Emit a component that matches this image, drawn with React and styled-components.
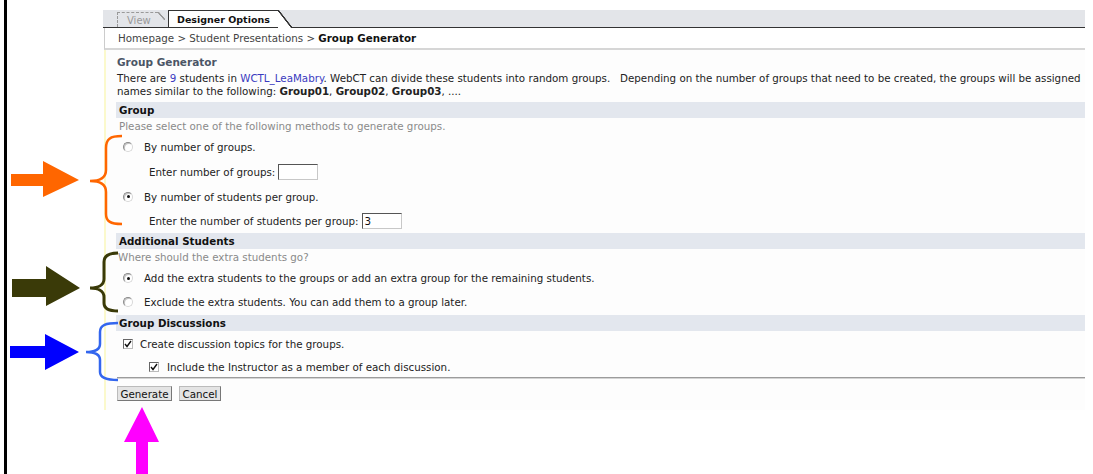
import React from 'react';
import styled, { createGlobalStyle } from 'styled-components';

const GlobalStyle = createGlobalStyle`
  html, body {
    margin: 0;
    padding: 0;
    background: #fff;
  }
`;

const Page = styled.div`
  position: relative;
  width: 1093px;
  height: 474px;
  overflow: hidden;
  display: flex;
  background: #fff;
  font-family: 'DejaVu Sans', Verdana, sans-serif;
  font-size: 10.3px;
  color: #222;
`;

const Edge = styled.div`
  width: 3px;
  margin-left: 4px;
  background: #000;
`;

const Shot = styled.div`
  width: 982px;
  margin-left: 96px;
  display: flex;
  flex-direction: column;
`;

/** tab strip */

const TabStrip = styled.div`
  margin-top: 10px;
  height: 17px;
  background: #e3e5e9;
  border-bottom: 1px solid #333;
  display: flex;
  align-items: flex-end;
  padding-left: 14px;
`;

const Tab = styled.div`
  position: relative;
  display: flex;
  align-items: center;
  box-sizing: border-box;
  height: ${p => (p.$active ? 17 : 15)}px;
  width: ${p => p.$width}px;
  padding-left: ${p => (p.$active ? 8 : 9)}px;
  margin-right: ${p => (p.$active ? 0 : 10)}px;
  background: ${p => (p.$active ? '#fff' : 'transparent')};
  border-left: 1px ${p => (p.$active ? 'solid #333' : 'dashed #999')};
  border-top: 1px ${p => (p.$active ? 'solid #333' : 'dashed #999')};
  color: ${p => (p.$active ? '#111' : '#999')};
  font-weight: ${p => (p.$active ? 'bold' : 'normal')};
  font-size: ${p => (p.$active ? '9.5px' : '10px')};

  &::after {
    content: '';
    position: absolute;
    top: -1px;
    right: ${p => (p.$active ? -14 : -7)}px;
    width: ${p => (p.$active ? 14 : 7)}px;
    height: ${p => (p.$active ? 18 : 8)}px;
    background: linear-gradient(
      to top right,
      ${p => (p.$active ? '#fff' : 'transparent')} calc(50% - 1px),
      ${p => (p.$active ? '#333' : '#999')} calc(50% - 0.5px),
      ${p => (p.$active ? '#333' : '#999')} calc(50% + 0.5px),
      transparent calc(50% + 1px)
    );
  }
`;

const Crumbs = styled.div`
  height: 20px;
  display: flex;
  align-items: center;
  padding-left: 13px;
  margin-left: 1px;
  border-left: 1px solid #ccc;
  border-bottom: 2px solid #d6d6d6;
  color: #444;
  white-space: pre;

  b {
    color: #111;
  }
`;

/** form body */

const Body = styled.div`
  margin-left: 1px;
  border-left: 2px solid #fbf9cc;
  background: #fdfdfd;
  padding: 5px 0 9px 11px;
  display: flex;
  flex-direction: column;
`;

const Title = styled.div`
  font-size: 10.5px;
  font-weight: bold;
  color: #4b5566;
  line-height: 14px;
`;

const Intro = styled.p`
  margin: 3px 0 0;
  line-height: 13px;
  white-space: nowrap;

  a {
    color: #3a3ac0;
    text-decoration: none;
  }
`;

const SectionBar = styled.div`
  margin-top: ${p => p.$gap}px;
  margin-left: -1px;
  height: 16px;
  padding-left: 3px;
  display: flex;
  align-items: center;
  background: #e3e7ee;
  font-weight: bold;
  color: #111;
`;

const Hint = styled.div`
  height: 16px;
  display: flex;
  align-items: center;
  padding-left: ${p => p.$indent}px;
  color: #8a8a8a;
`;

const Row = styled.div`
  height: ${p => p.$h}px;
  display: flex;
  align-items: center;
  padding-left: ${p => p.$indent}px;
  gap: ${p => p.$gap || 0}px;
`;

const RadioDot = styled.span`
  position: relative;
  box-sizing: border-box;
  width: 10px;
  height: 10px;
  border-radius: 50%;
  border: 1px solid #8a8a8a;
  border-bottom-color: #d8d8d8;
  border-right-color: #d8d8d8;
  background: #fff;
  box-shadow: inset 1px 1px 0 #c4c4c4;

  &::after {
    content: '';
    display: ${p => (p.$on ? 'block' : 'none')};
    position: absolute;
    left: 2.5px;
    top: 2.5px;
    width: 3px;
    height: 3px;
    border-radius: 50%;
    background: #111;
  }
`;

const CheckBox = styled.span`
  box-sizing: border-box;
  width: 10px;
  height: 10px;
  border: 1px solid #666;
  border-bottom-color: #bbb;
  border-right-color: #bbb;
  background: #fff;
  display: flex;
  align-items: center;
  justify-content: center;

  svg {
    display: block;
  }
`;

const TextBox = styled.span`
  box-sizing: border-box;
  width: 40px;
  height: 16px;
  margin-left: 3px;
  padding-left: 2px;
  display: flex;
  align-items: center;
  background: #fff;
  border: 1px solid #c8c8c8;
  border-top-color: #555;
  border-left-color: #555;
  color: #111;
`;

const Divider = styled.div`
  height: 0;
  border-top: 1px solid #9c9c9c;
  border-bottom: 1px solid #d4d4d4;
`;

const Buttons = styled.div`
  margin-top: 7px;
  display: flex;
  gap: 7px;
`;

const Button = styled.button`
  box-sizing: border-box;
  height: 15px;
  width: ${p => p.$width}px;
  padding: 0;
  font: inherit;
  color: #111;
  background: #e4e4e4;
  border: 1px solid #777;
  border-top-color: #bbb;
  border-left-color: #bbb;
  display: flex;
  align-items: center;
  justify-content: center;
`;

/** callouts drawn over the form */

const Marks = styled.svg`
  position: absolute;
  left: 0;
  top: 0;
  pointer-events: none;
`;

const Tick = () => (
  <svg width="8" height="8" viewBox="0 0 8 8">
    <path d="M1 4 L3 6.5 L7 1" fill="none" stroke="#111" strokeWidth="1.4" />
  </svg>
);

const Option = ({ on, h, children }) => (
  <Row $h={h} $indent={6} $gap={11}>
    <RadioDot $on={on} />
    <span>{children}</span>
  </Row>
);

const Check = ({ indent, gap, h, children }) => (
  <Row $h={h} $indent={indent} $gap={gap}>
    <CheckBox>
      <Tick />
    </CheckBox>
    <span>{children}</span>
  </Row>
);

const Callouts = () => (
  <Marks width="1093" height="474" viewBox="0 0 1093 474">
    <path d="M11 174 L43 174 L43 161 L79 180 L43 197 L43 186 L11 186 Z" fill="#ff6600" />
    <path
      d="M122 136 C110 136 106 139 106 148 L106 170 C106 178 100 181 90 181 C100 181 106 184 106 192 L106 214 C106 221 110 224 122 224"
      fill="none"
      stroke="#ff6600"
      strokeWidth="2.5"
    />
    <path d="M12 279 L46 279 L46 266 L80 288 L46 306 L46 297 L12 297 Z" fill="#3a3a08" />
    <path
      d="M118 253 C108 253 104 256 104 262 L104 279 C104 285 98 288 90 288 C98 288 104 291 104 297 L104 303 C104 308 108 311 118 311"
      fill="none"
      stroke="#3a3a08"
      strokeWidth="3"
    />
    <path d="M10 346 L45 346 L45 334 L79 352 L45 370 L45 358 L10 358 Z" fill="#0000ff" />
    <path
      d="M118 323 C106 323 100 325 100 332 L100 344 C100 350 94 352 86 352 C94 352 100 354 100 360 L100 372 C100 378 106 380 118 380"
      fill="none"
      stroke="#3366ee"
      strokeWidth="2.5"
    />
    <path d="M142 407 L159 442 L148 442 L148 474 L136 474 L136 442 L124 442 Z" fill="#ff00ff" />
  </Marks>
);

export default function App() {
  return (
    <Page>
      <GlobalStyle />
      <Edge />
      <Shot>
        <TabStrip>
          <Tab $width={41}>View</Tab>
          <Tab $active $width={110}>Designer Options</Tab>
        </TabStrip>
        <Crumbs>
          {'Homepage > Student Presentations > '}
          <b>Group Generator</b>
        </Crumbs>
        <Body>
          <Title>Group Generator</Title>
          <Intro>
            There are <a>9</a> students in <a>WCTL_LeaMabry</a>. WebCT can divide these students into
            random groups.&nbsp;&nbsp; Depending on the number of groups that need to be created, the
            groups will be assigned
            <br />
            names similar to the following: <b>Group01</b>, <b>Group02</b>, <b>Group03</b>, ....
          </Intro>

          <SectionBar $gap={4}>Group</SectionBar>
          <Hint $indent={2}>Please select one of the following methods to generate groups.</Hint>
          <Option h={26}>By number of groups.</Option>
          <Row $h={24} $indent={32}>
            Enter number of groups:
            <TextBox />
          </Row>
          <Option on h={25}>
            By number of students per group.
          </Option>
          <Row $h={24} $indent={32}>
            Enter the number of students per group:
            <TextBox>3</TextBox>
          </Row>

          <SectionBar $gap={0}>Additional Students</SectionBar>
          <Hint $indent={1}>Where should the extra students go?</Hint>
          <Option on h={26}>
            Add the extra students to the groups or add an extra group for the remaining students.
          </Option>
          <Option h={22}>Exclude the extra students. You can add them to a group later.</Option>

          <SectionBar $gap={2}>Group Discussions</SectionBar>
          <Check indent={6} gap={7} h={26}>
            Create discussion topics for the groups.
          </Check>
          <Check indent={32} gap={8} h={20}>
            Include the Instructor as a member of each discussion.
          </Check>
          <Divider />
          <Buttons>
            <Button $width={55}>Generate</Button>
            <Button $width={42}>Cancel</Button>
          </Buttons>
        </Body>
      </Shot>
      <Callouts />
    </Page>
  );
}
